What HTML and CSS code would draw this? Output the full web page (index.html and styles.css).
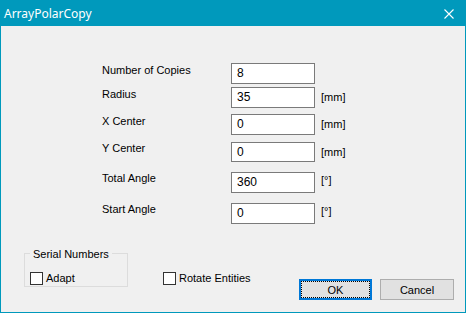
FILE: index.html
```html
<!DOCTYPE html>
<html lang="en">
<head>
    <meta charset="UTF-8">
    <title>ArrayPolarCopy</title>
    <link rel="stylesheet" href="styles.css">
</head>
<body>
    <div class="window">
        <div class="titlebar">
            <span class="title">ArrayPolarCopy</span>
            <svg class="close" width="10" height="10" viewBox="0 0 10 10">
                <path d="M0.5 0.5 L9.5 9.5 M9.5 0.5 L0.5 9.5" stroke="#fff" stroke-width="1.1" fill="none"/>
            </svg>
        </div>

        <div class="content">
            <div class="form">
                <div class="row r1">
                    <label>Number of Copies</label>
                    <div class="field">8</div>
                    <span class="unit"></span>
                </div>
                <div class="row r2">
                    <label>Radius</label>
                    <div class="field">35</div>
                    <span class="unit">[mm]</span>
                </div>
                <div class="row r3">
                    <label>X Center</label>
                    <div class="field">0</div>
                    <span class="unit">[mm]</span>
                </div>
                <div class="row r4">
                    <label>Y Center</label>
                    <div class="field short">0</div>
                    <span class="unit">[mm]</span>
                </div>
                <div class="row r5">
                    <label>Total Angle</label>
                    <div class="field">360</div>
                    <span class="unit deg">[°]</span>
                </div>
                <div class="row r6">
                    <label>Start Angle</label>
                    <div class="field">0</div>
                    <span class="unit deg">[°]</span>
                </div>
            </div>

            <div class="bottom">
                <div class="group">
                    <span class="group-title">Serial Numbers</span>
                    <div class="check"><span class="box"></span>Adapt</div>
                </div>
                <div class="check rotate"><span class="box"></span>Rotate Entities</div>
                <div class="buttons">
                    <button class="btn ok">OK</button>
                    <button class="btn">Cancel</button>
                </div>
            </div>
        </div>
    </div>
</body>
</html>
```

FILE: styles.css
```css
/* dialogue windows style */
:root {
    --accent: #0099bc; --face: #f0f0f0; --text: #000;
}
body { margin: 0; background: var(--face); font-family: 'Liberation Sans', Arial, sans-serif; font-size: 11px; color: var(--text); }
.window { width: 466px; height: 313px; box-sizing: border-box; border: 1px solid var(--accent); border-top: none; background: var(--face); display: flex; flex-direction: column; }

.titlebar { height: 26px; margin: 0 -1px; background: var(--accent); color: #fff; display: flex; align-items: center; justify-content: space-between; padding: 0 12px 0 4px; }
.title { font-family: 'Noto Sans', 'Open Sans', sans-serif; font-size: 12px; line-height: 16px; margin-top: 1px; }
.close { display: block; margin-bottom: -1px; }

.content { flex: 1; padding-top: 37px; }

.form { margin-left: 101px; }
.row { display: grid; grid-template-columns: 123px 84px auto; column-gap: 6px; align-items: start; }
.row label { line-height: 14px; }
.r2 { margin-top: 3px; }
.r3 { margin-top: 6px; }
.r4 { margin-top: 7px; }
.r4 label, .r5 label, .r6 label { margin-top: -1px; }
.r5 { margin-top: 10px; }
.r6 { margin-top: 10px; }
.field { height: 21px; box-sizing: border-box; border: 1px solid #7a7a7a; background: #fff; padding: 0 5px; line-height: 19px; font-size: 12px; }
.field.short { height: 20px; line-height: 18px; }
.unit { line-height: 14px; padding-top: 3px; }
.unit.deg { padding-top: 1px; }

.bottom { display: flex; align-items: flex-start; margin-top: 29px; padding-left: 23px; padding-right: 11px; }
.group { position: relative; width: 104px; height: 34px; box-sizing: border-box; border: 1px solid #dcdcdc; padding: 17px 0 0 5px; }
.group-title { position: absolute; top: -7px; left: 5px; padding: 0 3px; background: var(--face); line-height: 14px; }

.check { display: flex; align-items: center; line-height: 14px; }
.box { width: 13px; height: 13px; box-sizing: border-box; border: 1px solid #333; background: #fff; margin-right: 3px; }
.rotate { margin-left: 35px; margin-top: 18px; }

.buttons { margin-left: auto; margin-top: 26px; display: flex; gap: 8px; }
.btn { width: 73px; height: 21px; box-sizing: border-box; border: 1px solid #adadad; background: #e1e1e1; font-family: 'Liberation Sans', Arial, sans-serif; font-size: 11px; color: #000; padding: 0; }
.btn + .btn { width: 74px; }
.btn.ok { border: 2px solid #0078d7; outline: 1px dotted #000; outline-offset: -3px; }
```
